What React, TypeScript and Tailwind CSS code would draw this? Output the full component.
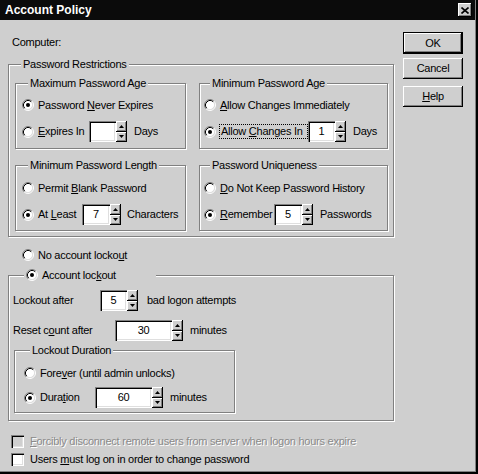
import type { ReactNode } from "react";

const raised = "shadow-[inset_-1px_-1px_0_#000,inset_1px_1px_0_#fff,inset_-2px_-2px_0_#808080]";
const sunken =
  "shadow-[inset_1px_1px_0_#808080,inset_2px_2px_0_#000,inset_-1px_-1px_0_#fff,inset_-2px_-2px_0_#dfdfdf]";

function Radio({ checked = false }: { checked?: boolean }) {
  return (
    <svg width="12" height="12" viewBox="0 0 12 12" className="shrink-0">
      <circle cx="6" cy="6" r="4.5" fill="#fff" />
      <path d="M2.11 9.89A5.5 5.5 0 0 1 9.89 2.11" fill="none" stroke="#808080" />
      <path d="M9.89 2.11A5.5 5.5 0 0 1 2.11 9.89" fill="none" stroke="#fff" />
      <path d="M2.82 9.18A4.5 4.5 0 0 1 9.18 2.82" fill="none" stroke="#000" />
      <path d="M9.18 2.82A4.5 4.5 0 0 1 2.82 9.18" fill="none" stroke="#dfdfdf" />
      {checked && <circle cx="6" cy="6" r="2" fill="#000" />}
    </svg>
  );
}

function Option({
  checked,
  children,
  className = "",
}: {
  checked?: boolean;
  children: ReactNode;
  className?: string;
}) {
  return (
    <div className={`flex h-[16px] shrink-0 items-center gap-[4px] overflow-hidden whitespace-nowrap ${className}`}>
      <Radio checked={checked} />
      <span>{children}</span>
    </div>
  );
}

function Arrow({ up }: { up?: boolean }) {
  return (
    <div className={`flex flex-1 items-center justify-center bg-[#cfcfcf] ${raised}`}>
      <svg width="5" height="3" viewBox="0 0 5 3">
        <path d={up ? "M0 3L2.5 0L5 3Z" : "M0 0L5 0L2.5 3Z"} fill="#000" />
      </svg>
    </div>
  );
}

function Spin({ value, box }: { value: string; box: string }) {
  return (
    <div className="flex h-[21px] shrink-0">
      <div className={`flex items-center justify-center bg-white ${sunken} ${box}`}>{value}</div>
      <div className="flex w-[11px] flex-col">
        <Arrow up />
        <Arrow />
      </div>
    </div>
  );
}

function Group({
  title,
  className = "",
  legend = "ml-[6px]",
  children,
}: {
  title: ReactNode;
  className?: string;
  legend?: string;
  children: ReactNode;
}) {
  return (
    <fieldset
      className={`min-w-0 border border-[#808080] shadow-[inset_1px_1px_0_#fff,1px_1px_0_#fff] ${className}`}
    >
      <legend className={`bg-[#cfcfcf] px-[2px] leading-[13px] ${legend}`}>{title}</legend>
      {children}
    </fieldset>
  );
}

function Check({ disabled }: { disabled?: boolean }) {
  return <div className={`h-[13px] w-[13px] shrink-0 ${disabled ? "bg-[#cfcfcf]" : "bg-white"} ${sunken}`} />;
}

export default function App() {
  return (
    <div className="relative h-[474px] w-[478px] overflow-hidden bg-[#cfcfcf] font-['Liberation_Sans',Arial,sans-serif] text-[11px] tracking-[-0.25px] text-black shadow-[inset_-1px_-1px_0_#000,inset_-2px_-2px_0_#000,inset_-3px_-3px_0_#808080]">
      {/* Title bar */}
      <div className="flex h-[20px] w-[475px] items-center justify-between bg-[#0b0b0b] pl-[5px] pr-[3px]">
        <span className="text-[12px] font-bold tracking-normal text-white">Account Policy</span>
        <div className={`flex h-[14px] w-[14px] items-center justify-center bg-[#cfcfcf] ${raised}`}>
          <svg width="8" height="7" viewBox="0 0 8 7">
            <path d="M0.5 0.5L7.5 6.5M7.5 0.5L0.5 6.5" stroke="#000" strokeWidth="1.6" />
          </svg>
        </div>
      </div>

      <div className="flex pl-[8px] pt-[12px]">
        <div className="flex w-[386px] flex-col">
          <div className="mt-[4px] pl-[4px] leading-[13px]">Computer:</div>

          <Group title="Password Restrictions" className="mt-[9px] pb-[5px] pl-[6px] pr-[5px]">
            <div className="grid grid-cols-[171px_189px] gap-x-[13px] gap-y-[10px] pt-[6px]">
              <Group title="Maximum Password Age" className="pb-[6px] pl-[6px]">
                <div className="flex flex-col gap-[8px] pt-[7px]">
                  <Option checked>
                    Password <u>N</u>ever Expires
                  </Option>
                  <div className="flex h-[21px] items-center">
                    <Option className="w-[67px]">
                      <u>E</u>xpires In
                    </Option>
                    <Spin value="" box="w-[27px]" />
                    <span className="ml-[7px]">Days</span>
                  </div>
                </div>
              </Group>

              <Group title="Minimum Password Age" className="pb-[6px] pl-[4px]">
                <div className="flex flex-col gap-[8px] pt-[7px]">
                  <Option>
                    <u>A</u>llow Changes Immediately
                  </Option>
                  <div className="flex h-[21px] items-center">
                    <div className="flex h-[16px] w-[104px] shrink-0 items-center gap-[3px] overflow-hidden whitespace-nowrap">
                      <Radio checked />
                      <span className="border border-dotted border-black pl-[1px] pr-[4px] leading-[13px]">
                        Allow <u>C</u>hanges In
                      </span>
                    </div>
                    <Spin value="1" box="w-[27px]" />
                    <span className="ml-[7px]">Days</span>
                  </div>
                </div>
              </Group>

              <Group title="Minimum Password Length" className="pb-[5px] pl-[6px]">
                <div className="flex flex-col gap-[8px] pt-[8px]">
                  <Option>
                    Permit <u>B</u>lank Password
                  </Option>
                  <div className="flex h-[21px] items-center">
                    <Option checked className="w-[60px]">
                      At <u>L</u>east
                    </Option>
                    <Spin value="7" box="w-[28px]" />
                    <span className="ml-[6px]">Characters</span>
                  </div>
                </div>
              </Group>

              <Group title="Password Uniqueness" className="pb-[5px] pl-[4px]">
                <div className="flex flex-col gap-[8px] pt-[8px]">
                  <Option>
                    <u>D</u>o Not Keep Password History
                  </Option>
                  <div className="flex h-[21px] items-center">
                    <Option checked className="w-[70px]">
                      <u>R</u>emember
                    </Option>
                    <Spin value="5" box="w-[28px]" />
                    <span className="ml-[7px]">Passwords</span>
                  </div>
                </div>
              </Group>
            </div>
          </Group>

          <Option className="ml-[14px] mt-[10px]">
            No account locko<u>u</u>t
          </Option>

          <Group
            title={
              <span className="flex h-[16px] items-center gap-[4px]">
                <Radio checked />
                <span>
                  Account loc<u>k</u>out
                </span>
              </span>
            }
            legend="ml-[11px] w-[132px]"
            className="mt-[4px] pb-[7px] pl-[4px] pr-[5px]"
          >
            <div className="flex flex-col pt-[7px]">
              <div className="flex h-[21px] items-center">
                <span className="w-[87px] shrink-0">Lockout after</span>
                <Spin value="5" box="w-[27px]" />
                <span className="ml-[9px]">bad logon attempts</span>
              </div>
              <div className="mt-[9px] flex h-[21px] items-center">
                <span className="w-[102px] shrink-0">
                  Reset c<u>o</u>unt after
                </span>
                <Spin value="30" box="w-[57px]" />
                <span className="ml-[7px]">minutes</span>
              </div>
              <Group title="Lockout Duration" className="ml-[1px] mt-[3px] w-[221px] pb-[4px] pl-[9px]">
                <div className="flex flex-col gap-[6px] pt-[8px]">
                  <Option>
                    Fore<u>v</u>er (until admin unlocks)
                  </Option>
                  <div className="flex h-[21px] items-center">
                    <Option checked className="w-[71px]">
                      Dura<u>t</u>ion
                    </Option>
                    <Spin value="60" box="w-[57px]" />
                    <span className="ml-[7px]">minutes</span>
                  </div>
                </div>
              </Group>
            </div>
          </Group>

          <div className="mt-[12px] flex flex-col gap-[2px] pl-[3px]">
            <div className="flex h-[16px] items-center gap-[6px] whitespace-nowrap">
              <Check disabled />
              <span className="text-[#8a8a8a] [text-shadow:1px_1px_0_#fff]">
                <u>F</u>orcibly disconnect remote users from server when logon hours expire
              </span>
            </div>
            <div className="flex h-[16px] items-center gap-[6px] whitespace-nowrap">
              <Check />
              <span>
                Users <u>m</u>ust log on in order to change password
              </span>
            </div>
          </div>
        </div>

        <div className="ml-[9px] flex w-[60px] flex-col">
          <button className={`h-[22px] border border-black bg-[#cfcfcf] ${raised}`}>OK</button>
          <button className={`mt-[4px] h-[21px] bg-[#cfcfcf] ${raised}`}>Cancel</button>
          <button className={`mt-[7px] h-[21px] bg-[#cfcfcf] ${raised}`}>
            <u>H</u>elp
          </button>
        </div>
      </div>
    </div>
  );
}
